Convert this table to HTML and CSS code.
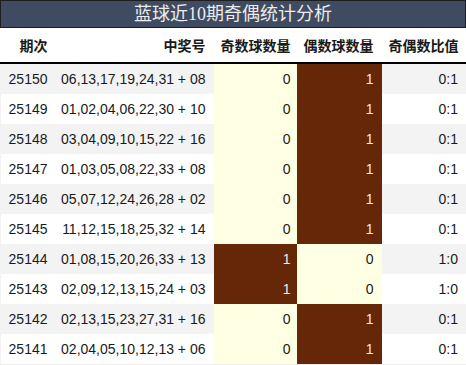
FILE: index.html
```html
<!DOCTYPE html>
<html lang="zh">
<head>
<meta charset="utf-8">
<link rel="stylesheet" href="styles.css">
</head>
<body>
<div class="wrap">
  <div class="title">蓝球近10期奇偶统计分析</div>
  <table class="stats">
    <colgroup>
      <col class="c1"><col class="c2"><col class="c3"><col class="c4"><col class="c5">
    </colgroup>
    <thead>
      <tr><th>期次</th><th>中奖号</th><th class="odd-col">奇数球数量</th><th>偶数球数量</th><th>奇偶数比值</th></tr>
    </thead>
    <tbody>
      <tr><td>25150</td><td>06,13,17,19,24,31 + 08</td><td class="odd-col lo">0</td><td class="hi">1</td><td>0:1</td></tr>
      <tr><td>25149</td><td>01,02,04,06,22,30 + 10</td><td class="odd-col lo">0</td><td class="hi">1</td><td>0:1</td></tr>
      <tr><td>25148</td><td>03,04,09,10,15,22 + 16</td><td class="odd-col lo">0</td><td class="hi">1</td><td>0:1</td></tr>
      <tr><td>25147</td><td>01,03,05,08,22,33 + 08</td><td class="odd-col lo">0</td><td class="hi">1</td><td>0:1</td></tr>
      <tr><td>25146</td><td>05,07,12,24,26,28 + 02</td><td class="odd-col lo">0</td><td class="hi">1</td><td>0:1</td></tr>
      <tr><td>25145</td><td>11,12,15,18,25,32 + 14</td><td class="odd-col lo">0</td><td class="hi">1</td><td>0:1</td></tr>
      <tr><td>25144</td><td>01,08,15,20,26,33 + 13</td><td class="odd-col hi">1</td><td class="lo">0</td><td>1:0</td></tr>
      <tr><td>25143</td><td>02,09,12,13,15,24 + 03</td><td class="odd-col hi">1</td><td class="lo">0</td><td>1:0</td></tr>
      <tr><td>25142</td><td>02,13,15,23,27,31 + 16</td><td class="odd-col lo">0</td><td class="hi">1</td><td>0:1</td></tr>
      <tr><td>25141</td><td>02,04,05,10,12,13 + 06</td><td class="odd-col lo">0</td><td class="hi">1</td><td>0:1</td></tr>
    </tbody>
  </table>
</div>
</body>
</html>
```
FILE: styles.css
```css
html, body {
  margin: 0;
  padding: 0;
  background: #ffffff;
}
.wrap {
  width: 466px;
}
.title {
  height: 26px;
  line-height: 26px;
  border: 1px solid #1e1e1e;
  background: #3f4b60;
  color: #ececec;
  font-family: "Liberation Serif", "Noto Sans CJK SC", serif;
  font-size: 18px;
  text-align: center;
}
.stats {
  width: 466px;
  border-collapse: collapse;
  table-layout: fixed;
  font-family: "Liberation Sans", "Noto Sans CJK SC", sans-serif;
  font-size: 14px;
  color: #1a1a1a;
}
.c1 { width: 55px; }
.c2 { width: 158px; }
.c3 { width: 83px; }
.c4 { width: 85px; }
.c5 { width: 85px; }
.stats th {
  height: 34px;
  padding: 0 8px 0 0;
  text-align: right;
  font-weight: bold;
  border-bottom: 2px solid #000;
}
.stats td {
  height: 30px;
  padding: 0 8px 0 0;
  text-align: right;
  border: 0;
}
.stats .odd-col {
  padding-right: 6px;
}
.stats tbody tr:nth-child(odd) td {
  background: #f3f3f3;
}
.stats tbody tr:last-child td {
  border-bottom: 1px solid #ececec;
}
.stats tbody tr td:last-child {
  border-right: 1px solid #ececec;
}
.stats tbody tr td:first-child {
  border-left: 1px solid #f3f3f3;
}
.stats tbody tr td.lo {
  background: #ffffe4;
  color: #1a1a1a;
}
.stats tbody tr td.hi {
  background: #662709;
  color: #eeeeee;
}
```
